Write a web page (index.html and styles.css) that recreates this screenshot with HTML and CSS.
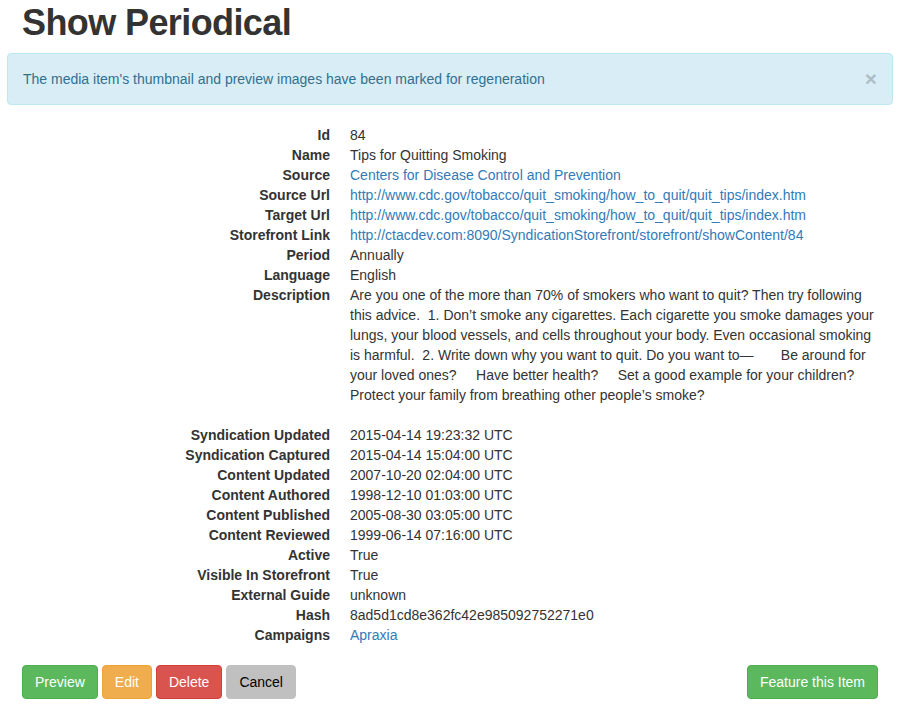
FILE: index.html
```html
<!DOCTYPE html>
<html>
<head>
<meta charset="utf-8">
<title>Show Periodical</title>
<link rel="stylesheet" href="styles.css">
</head>
<body>
<div class="page">
  <h1 class="title">Show Periodical</h1>
  <div class="alert">
    <span>The media item's thumbnail and preview images have been marked for regeneration</span>
    <button class="close" type="button">×</button>
  </div>
  <div class="content">
    <dl class="details">
      <dt>Id</dt><dd>84</dd>
      <dt>Name</dt><dd>Tips for Quitting Smoking</dd>
      <dt>Source</dt><dd><a href="#">Centers for Disease Control and Prevention</a></dd>
      <dt>Source Url</dt><dd><a href="#">http://www.cdc.gov/tobacco/quit_smoking/how_to_quit/quit_tips/index.htm</a></dd>
      <dt>Target Url</dt><dd><a href="#">http://www.cdc.gov/tobacco/quit_smoking/how_to_quit/quit_tips/index.htm</a></dd>
      <dt>Storefront Link</dt><dd><a href="#">http://ctacdev.com:8090/SyndicationStorefront/storefront/showContent/84</a></dd>
      <dt>Period</dt><dd>Annually</dd>
      <dt>Language</dt><dd>English</dd>
      <dt>Description</dt><dd class="desc">Are you one of the more than 70% of smokers who want to quit? Then try following this advice.&nbsp; 1. Don’t smoke any cigarettes. Each cigarette you smoke damages your lungs, your blood vessels, and cells throughout your body. Even occasional smoking is harmful.&nbsp; 2. Write down why you want to quit. Do you want to—&nbsp; &nbsp; &nbsp; &nbsp;Be around for your loved ones?&nbsp; &nbsp; &nbsp;Have better health?&nbsp; &nbsp; &nbsp;Set a good example for your children?&nbsp; &nbsp;<wbr>Protect your family from breathing other people’s smoke?</dd>
      <dt>Syndication Updated</dt><dd>2015-04-14 19:23:32 UTC</dd>
      <dt>Syndication Captured</dt><dd>2015-04-14 15:04:00 UTC</dd>
      <dt>Content Updated</dt><dd>2007-10-20 02:04:00 UTC</dd>
      <dt>Content Authored</dt><dd>1998-12-10 01:03:00 UTC</dd>
      <dt>Content Published</dt><dd>2005-08-30 03:05:00 UTC</dd>
      <dt>Content Reviewed</dt><dd>1999-06-14 07:16:00 UTC</dd>
      <dt>Active</dt><dd>True</dd>
      <dt>Visible In Storefront</dt><dd>True</dd>
      <dt>External Guide</dt><dd>unknown</dd>
      <dt>Hash</dt><dd>8ad5d1cd8e362fc42e985092752271e0</dd>
      <dt>Campaigns</dt><dd><a href="#">Apraxia</a></dd>
    </dl>
    <div class="actions">
      <div class="btn-group">
        <button class="btn btn-success" type="button">Preview</button>
        <button class="btn btn-warning" type="button">Edit</button>
        <button class="btn btn-danger" type="button">Delete</button>
        <button class="btn btn-cancel" type="button">Cancel</button>
      </div>
      <button class="btn btn-success" type="button">Feature this Item</button>
    </div>
  </div>
</div>
</body>
</html>
```

FILE: styles.css
```css
html, body {
  margin: 0;
  padding: 0;
  background: #fff;
}
body {
  font-family: "Liberation Sans", Arial, sans-serif;
  font-size: 14px;
  line-height: 20px;
  color: #333;
}
.page {
  width: 886px;
  padding: 0 6px 0 7px;
}
.title {
  margin: 3px 0 10px;
  padding: 0 15px;
  font-size: 36px;
  line-height: 40px;
  font-weight: bold;
  letter-spacing: -0.6px;
  color: #333;
}
.alert {
  display: flex;
  justify-content: space-between;
  align-items: center;
  padding: 15px;
  border: 1px solid #bce8f1;
  border-radius: 4px;
  background: #d9edf7;
  color: #31708f;
  margin-bottom: 20px;
}
.close {
  border: 0;
  background: none;
  padding: 0;
  margin: 0 0 0 10px;
  font-family: "Liberation Sans", Arial, sans-serif;
  font-size: 21px;
  font-weight: bold;
  line-height: 20px;
  color: #000;
  opacity: 0.2;
  cursor: pointer;
}
.content {
  padding: 0 15px;
}
.details {
  display: grid;
  grid-template-columns: 308px 1fr;
  column-gap: 20px;
  margin: 0 0 20px;
}
.details dt {
  font-weight: bold;
  text-align: right;
  white-space: nowrap;
}
.details dd {
  margin: 0;
}
.details .desc {
  margin-bottom: 20px;
}
a {
  color: #337ab7;
  text-decoration: none;
}
.actions {
  display: flex;
  justify-content: space-between;
  align-items: center;
  margin-bottom: 10px;
}
.btn-group {
  display: flex;
  gap: 4px;
}
.btn {
  font-family: "Liberation Sans", Arial, sans-serif;
  font-size: 14px;
  line-height: 20px;
  padding: 6px 12px;
  border: 1px solid transparent;
  border-radius: 4px;
  color: #fff;
  cursor: pointer;
}
.btn-success {
  background: #5cb85c;
  border-color: #4cae4c;
}
.btn-warning {
  background: #f0ad4e;
  border-color: #eea236;
}
.btn-danger {
  background: #d9534f;
  border-color: #d43f3a;
}
.btn-cancel {
  background: #c0c0c0;
  border-color: #c0c0c0;
  color: #000;
}
```
